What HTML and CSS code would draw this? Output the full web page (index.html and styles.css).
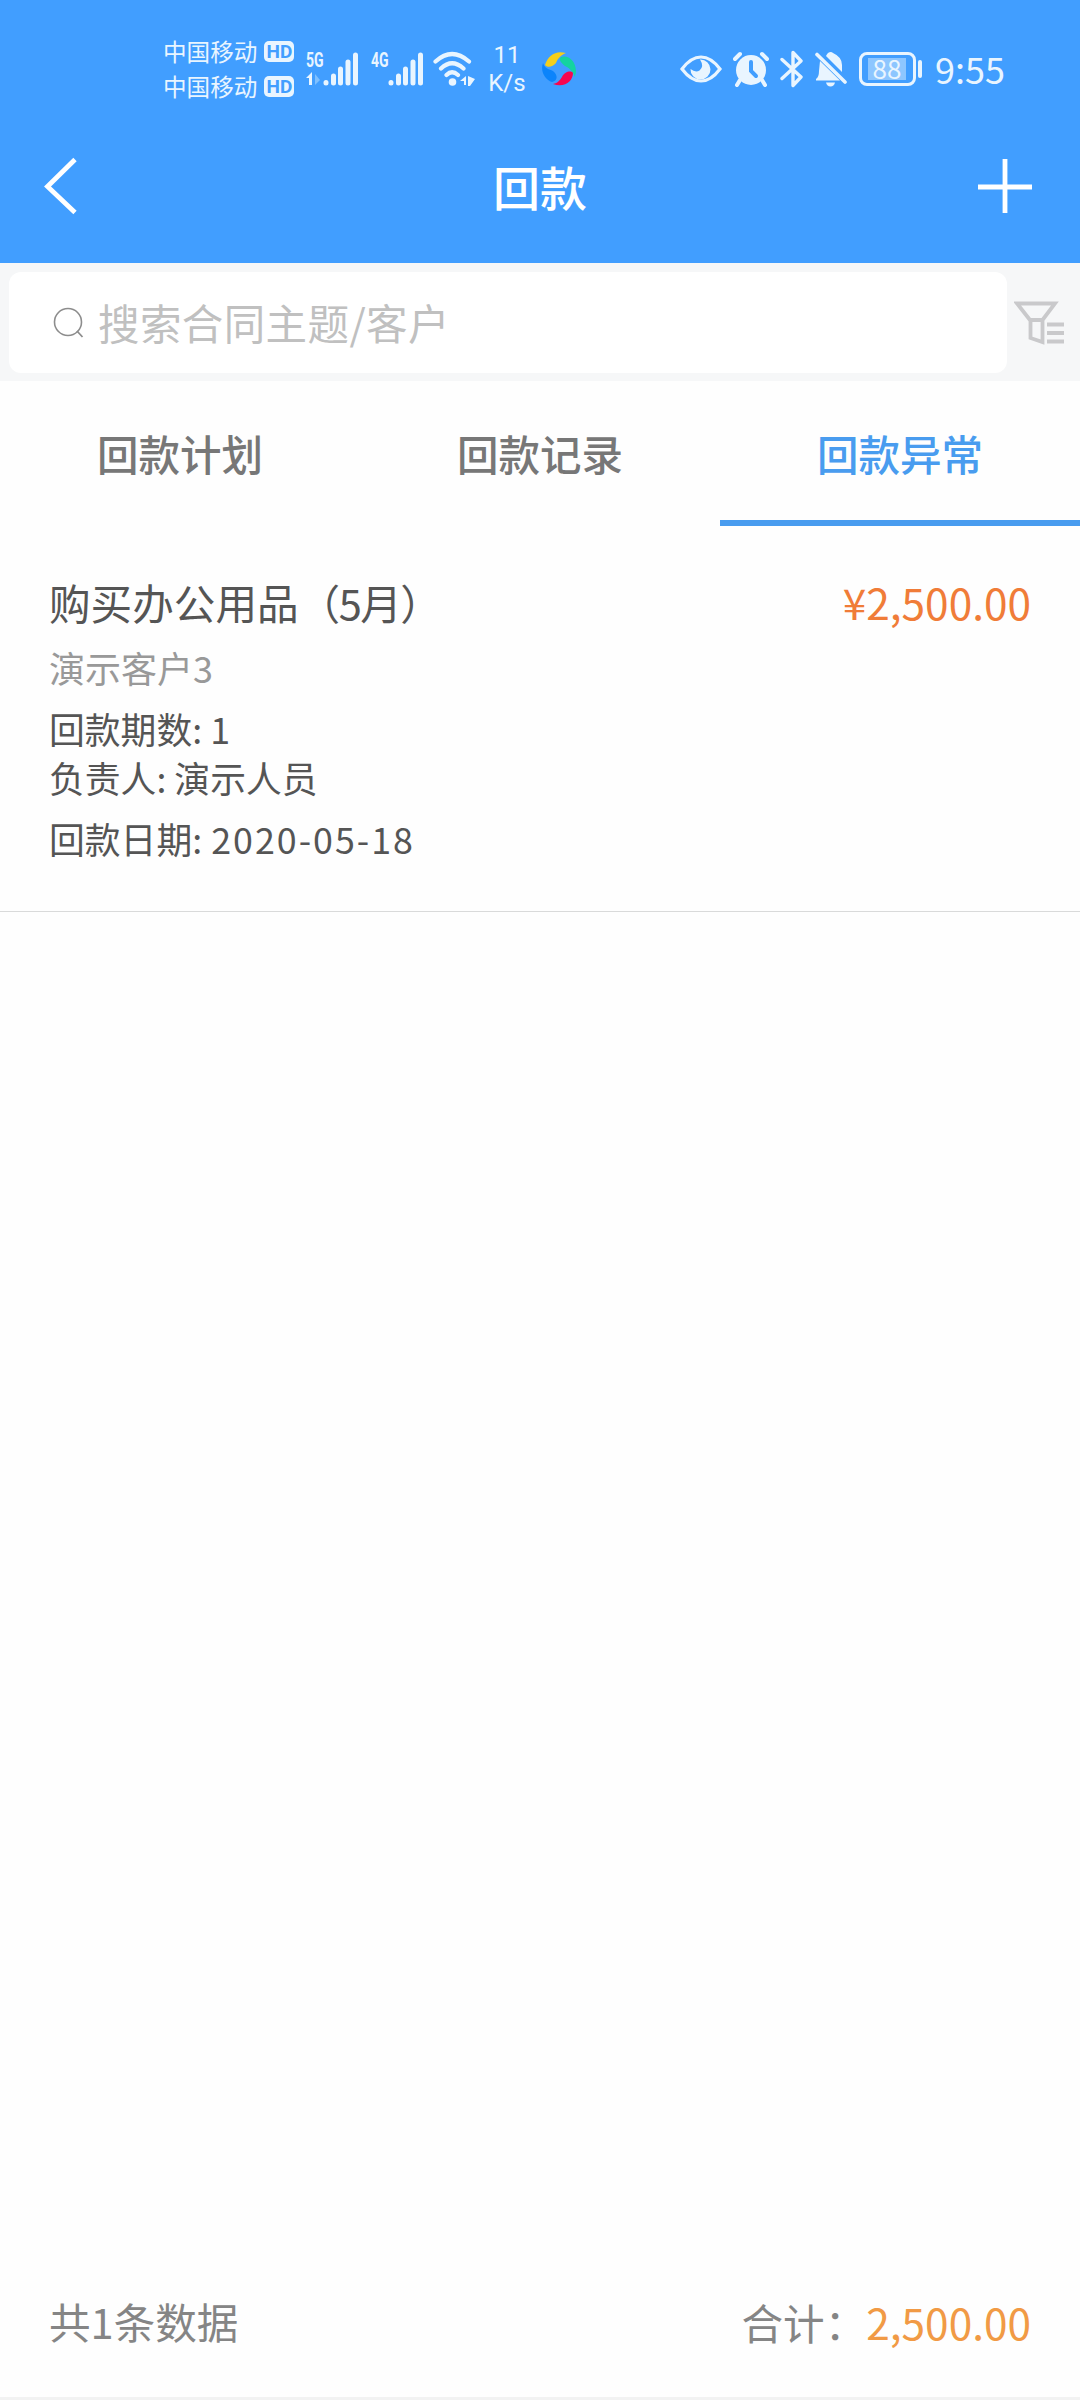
FILE: index.html
```html
<!DOCTYPE html>
<html lang="zh-CN">
<head>
  <meta charset="UTF-8">
  <title>回款</title>
  <link rel="stylesheet" href="styles.css">
</head>
<body>
<div class="page">
  <div class="header">
    <div class="status">
      <div class="carrier">
        <p>中国移动<span class="hd">HD</span></p>
        <p>中国移动<span class="hd">HD</span></p>
      </div>
      <div class="signal">
        <span class="net">5G</span>
        <svg width="53" height="36" viewBox="0 0 53 36">
          <path d="M0 27l6-6v13h-3v-7z" fill="#e9f5ff"/>
          <path d="M9 23v11l5-5z" fill="#7fc0ff"/>
          <path d="M20 31.5v.5M27.5 25v7M34.5 18v14M42 11v21M49.5 4v28" stroke="#e9f5ff" stroke-width="5" stroke-linecap="round"/>
        </svg>
      </div>
      <div class="signal signal-4g">
        <span class="net">4G</span>
        <svg width="53" height="36" viewBox="0 0 53 36">
          <path d="M20 31.5v.5M27.5 25v7M34.5 18v14M42 11v21M49.5 4v28" stroke="#e9f5ff" stroke-width="5" stroke-linecap="round"/>
        </svg>
      </div>
      <svg class="wifi" width="42" height="36" viewBox="0 0 42 36">
        <path d="M2.5 10.5Q19 -4.5 36 10.5M8 17.5Q19 7 30.5 17.5M13.5 24Q19 18.5 25 24" fill="none" stroke="#e9f5ff" stroke-width="4.2" stroke-linecap="round"/>
        <circle cx="19.5" cy="31" r="3.8" fill="#e9f5ff"/>
        <path d="M27 30l6-5v9h-2v-4zM35 25l7 3-5 7h-2z" fill="#e9f5ff"/>
      </svg>
      <div class="speed"><span>11</span><span>K/s</span></div>
      <svg class="ball" width="36" height="36" viewBox="0 0 36 36">
        <path d="M4 14C7 4 15-1 25 2C20 4 17 7 15 12C12 16 6 17 4 14z" fill="#f5cf1b"/>
        <path d="M20 6C28 3 38 12 34 26C31 19 28 17 24 15C20 12 17 8 20 6z" fill="#14d3a0"/>
        <path d="M32 22C32 30 24 37 12 33C17 32 19 29 21 26C23 21 30 19 32 22z" fill="#f8064f"/>
        <path d="M2 12C4 18 8 18 12 20C17 24 17 30 11 31C4 29-1 20 2 12z" fill="#0b84fb"/>
      </svg>

      <div class="status-right">
        <svg width="42" height="30" viewBox="0 0 42 30">
          <path d="M2 15Q11 3 21 3T40 15Q31 27 21 27T2 15z" fill="none" stroke="#e9f5ff" stroke-width="3.2"/>
          <path d="M20 5.500a10 10 0 1 1-9.500 9.500q5 4 9 1.500q5-4 .5-11z" fill="#e9f5ff"/>
        </svg>
        <svg class="alarm" width="36" height="36" viewBox="0 0 36 36">
          <circle cx="18" cy="19" r="15" fill="#e9f5ff"/>
          <path d="M2 8l5-5M34 8l-5-5M7 29l-3 5M29 29l3 5" stroke="#e9f5ff" stroke-width="4" stroke-linecap="round"/>
          <path d="M18 11v9l5 5" fill="none" stroke="#419eff" stroke-width="4" stroke-linecap="round"/>
        </svg>
        <svg class="bt" width="24" height="38" viewBox="0 0 24 38">
          <path d="M2 9.5l19 17.5-8 8.5V2.5l8 8.500L2 28.500" fill="none" stroke="#e9f5ff" stroke-width="3.4" stroke-linejoin="round" stroke-linecap="round"/>
        </svg>
        <svg class="bell" width="32" height="36" viewBox="0 0 32 36">
          <path d="M5 10L25 29.5H1V28Q4 26 4 20zM11 5Q12 3 13 2Q16 0 18 2Q27 6 27 14V21z" fill="#e9f5ff"/>
          <path d="M2 3.5L30 31" stroke="#e9f5ff" stroke-width="3.6" stroke-linecap="round"/>
          <path d="M11 31.5h9q-1 4-4.500 4t-4.500-4z" fill="#e9f5ff"/>
        </svg>
        <div class="battery"><span>88</span></div>
        <span class="time">9:55</span>
      </div>
    </div>
    <div class="nav">
      <svg width="40" height="60" viewBox="0 0 40 60">
        <path d="M35 3.5L7.5 30.5L35 56.5" fill="none" stroke="#fff" stroke-width="4.8"/>
      </svg>
      <h1>回款</h1>
      <svg width="54" height="54" viewBox="0 0 54 54">
        <path d="M27 0v54M0 28h54" stroke="#fff" stroke-width="4.8"/>
      </svg>
    </div>
  </div>

  <div class="search">
    <div class="search-box">
      <svg width="32" height="34" viewBox="0 0 32 34">
        <circle cx="15" cy="16" r="13.5" fill="none" stroke="#8d8d8d" stroke-width="1.6"/>
        <path d="M24 25l5.5 6" stroke="#8d8d8d" stroke-width="1.8"/>
      </svg>
      <span>搜索合同主题/客户</span>
    </div>
    <svg class="filter" width="50" height="46" viewBox="0 0 50 46">
      <path d="M3 3.5H41L28.500 20H16zM16.500 20V38L28.500 42V20" fill="none" stroke="#c9c9cb" stroke-width="3.8"/>
      <path d="M33 24.5h17M33 33h17M33 41.5h17" stroke="#c9c9cb" stroke-width="3.8"/>
    </svg>
  </div>

  <ul class="tabs">
    <li>回款计划</li>
    <li>回款记录</li>
    <li class="current">回款异常</li>
  </ul>

  <div class="item">
    <div class="item-top">
      <h2>购买办公用品<span class="month">（5月）</span></h2>
      <span class="money">¥2,500.00</span>
    </div>
    <p class="customer">演示客户3</p>
    <p class="row">回款期数: 1</p>
    <p class="row owner">负责人: 演示人员</p>
    <p class="row">回款日期: <span class="date">2020-05-18</span></p>
  </div>

  <div class="footer">
    <span>共1条数据</span>
    <span class="total">合计：<b>2,500.00</b></span>
  </div>
</div>
</body>
</html>
```

FILE: styles.css
```css
* {
  padding: 0;
  margin: 0;
  list-style: none;
  box-sizing: border-box;
}

body {
  font-family: "Noto Sans CJK SC", sans-serif;
  background: #fefefe;
  color: #555;
}

svg {
  display: block;
  flex: none;
}

.page {
  height: 2400px;
  display: flex;
  flex-direction: column;
  border-bottom: 3px solid #f2f2f2;
}

.header {
  height: 263px;
  background: #419eff;
  color: #fff;
}

/* 状态栏 */
.status {
  height: 109px;
  padding: 28px 76px 0 163px;
  display: flex;
  align-items: center;
  color: #e9f5ff;
}

.carrier {
  width: 143px;
  font-size: 23.6px;
  line-height: 35px;
}

.carrier p {
  display: flex;
  align-items: center;
  white-space: nowrap;
}

.hd {
  width: 30px;
  height: 21px;
  margin-left: 7px;
  border-radius: 5px;
  background: #e9f5ff;
  color: #419eff;
  font: bold 19px/22px Roboto, sans-serif;
  text-align: center;
}

.signal {
  position: relative;
  width: 53px;
}

.signal-4g {
  margin-left: 12px;
}

.net {
  position: absolute;
  left: 0;
  top: -1px;
  font: bold 20px/20px Roboto, sans-serif;
  transform: scaleX(.7);
  transform-origin: left;
}

.wifi {
  margin-left: 9px;
}

.speed {
  width: 40px;
  margin-left: 12px;
  display: flex;
  flex-direction: column;
  font: 24px/28px Roboto, sans-serif;
  text-align: center;
}

.ball {
  margin-left: 14px;
}

.status-right {
  margin-left: auto;
  display: flex;
  align-items: center;
}

.alarm,
.bt,
.bell {
  margin-left: 11px;
}

.battery {
  position: relative;
  width: 57px;
  height: 34px;
  margin-left: 12px;
  padding: 3px;
  border: 3px solid #e9f5ff;
  border-radius: 8px;
}

.battery span {
  display: block;
  width: 38px;
  height: 22px;
  margin-left: 3px;
  background: #8dc6ff;
  font-size: 26px;
  line-height: 20px;
  text-align: center;
}

.battery:after {
  content: "";
  position: absolute;
  right: -9px;
  top: 5px;
  width: 4px;
  height: 18px;
  border-radius: 2px;
  background: #e9f5ff;
}

.time {
  width: 69px;
  margin-left: 19px;
  padding-bottom: 2px;
  font-size: 36px;
  line-height: 40px;
  white-space: nowrap;
}

/* 标题栏 */
.nav {
  height: 154px;
  padding: 0 48px 0 40px;
  display: flex;
  align-items: center;
  justify-content: space-between;
}

.nav h1 {
  margin: 0 0 2px 22px;
  font-size: 47px;
  font-weight: 500;
}

.search {
  height: 118px;
  padding: 9px 16px 8px 9px;
  display: flex;
  align-items: center;
  justify-content: space-between;
  background: #f6f7f8;
}

.search-box {
  width: 998px;
  height: 101px;
  padding-left: 44px;
  display: flex;
  align-items: center;
  border-radius: 12px;
  background: #fff;
  color: #c0c0c0;
  font-size: 41.5px;
}

.search-box span {
  margin: 0 0 2px 13px;
  letter-spacing: .4px;
}

.tabs {
  height: 145px;
  display: flex;
}

.tabs li {
  flex: 1;
  border-bottom: 6px solid transparent;
  color: #777;
  font-size: 41.5px;
  font-weight: 500;
  line-height: 145px;
  text-align: center;
}

.tabs .current {
  border-color: #499cef;
  color: #499cef;
}

.item {
  height: 386px;
  padding: 45px 49px 0;
  border-bottom: 1px solid #d9dada;
}

.item-top {
  height: 62px;
  display: flex;
  justify-content: space-between;
  line-height: 62px;
}

.item h2 {
  font-size: 41.6px;
  font-weight: 400;
}

.month {
  letter-spacing: -1.5px;
}

.money {
  color: #f07c38;
  font-size: 42.4px;
}

.customer {
  margin-top: 9px;
  color: #999;
  font-size: 36px;
  line-height: 50px;
}

.row {
  margin-top: 12px;
  font-size: 35.8px;
  line-height: 49px;
}

.row.owner {
  margin-top: 0;
}

.date {
  margin-left: 1px;
  letter-spacing: 2px;
}

.footer {
  height: 145px;
  margin-top: auto;
  padding: 0 49px 7px;
  display: flex;
  align-items: center;
  justify-content: space-between;
  color: #858585;
  font-size: 41.6px;
}

.total b {
  color: #f19a45;
  font-size: 42.4px;
  font-weight: 400;
}
```
